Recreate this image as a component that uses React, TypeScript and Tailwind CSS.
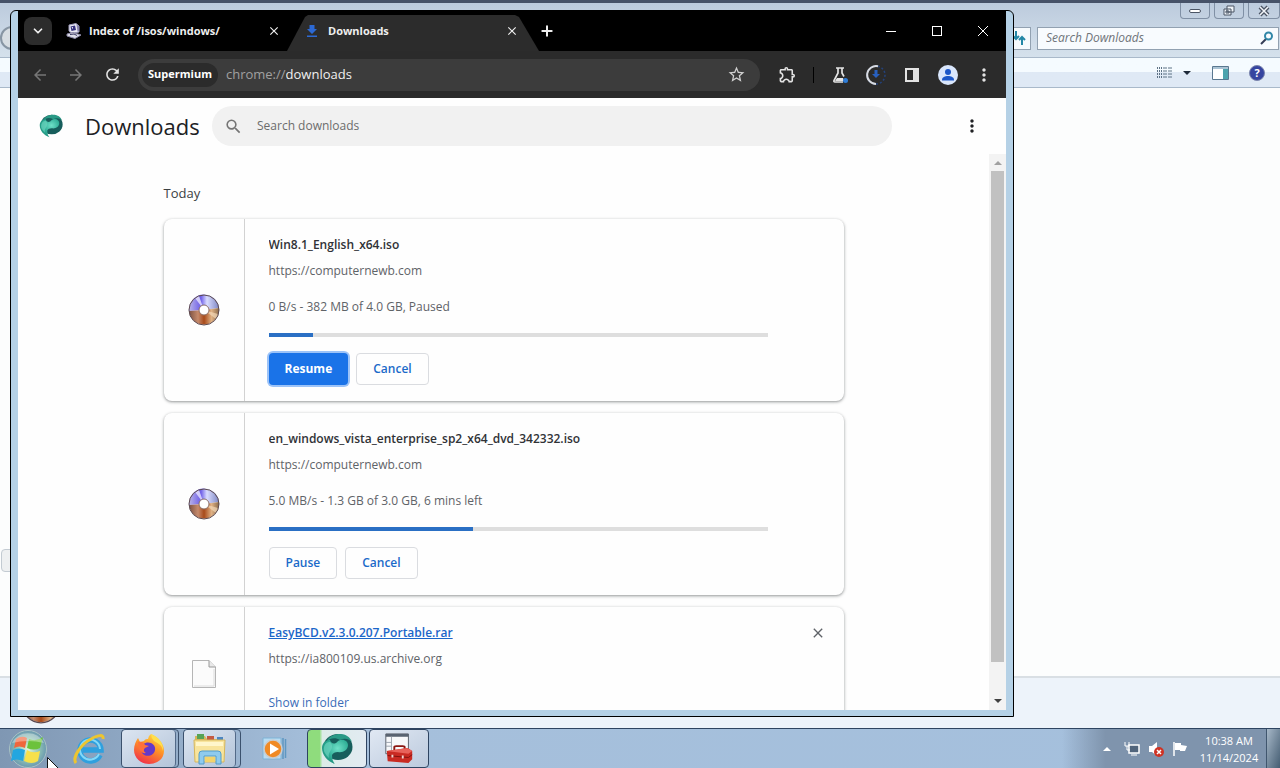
import { ReactNode } from "react";
import {
  MdArrowBack,
  MdArrowForward,
  MdClose,
  MdMoreVert,
  MdOutlineExtension,
  MdRefresh,
  MdSearch,
  MdStarBorder,
} from "react-icons/md";
import { ChevronDown, Plus } from "lucide-react";

interface IDownload {
  name: string
  host: string
  status: string
  progress: number
  paused: boolean
}

const downloads: IDownload[] = [
  { name: "Win8.1_English_x64.iso", host: "https://computernewb.com", status: "0 B/s - 382 MB of 4.0 GB, Paused", progress: 9, paused: true },
  { name: "en_windows_vista_enterprise_sp2_x64_dvd_342332.iso", host: "https://computernewb.com", status: "5.0 MB/s - 1.3 GB of 3.0 GB, 6 mins left", progress: 41, paused: false },
];

const DiscIcon = ({ className }: { className: string }) => (
  <svg viewBox="0 0 32 32" className={className}>
    <defs>
      <linearGradient id="discTop" x1="0" y1="0" x2="1" y2="0">
        <stop offset="0" stopColor="#b9b4e8" />
        <stop offset="0.4" stopColor="#6f5fe8" />
        <stop offset="0.6" stopColor="#d9dcff" />
        <stop offset="1" stopColor="#7d86c4" />
      </linearGradient>
      <linearGradient id="discBottom" x1="0" y1="0" x2="1" y2="0">
        <stop offset="0" stopColor="#7d5242" />
        <stop offset="0.3" stopColor="#c58a6c" />
        <stop offset="0.5" stopColor="#a84a1a" />
        <stop offset="0.75" stopColor="#dfb184" />
        <stop offset="1" stopColor="#8a6a4a" />
      </linearGradient>
    </defs>
    <path d="M1 17A15 15 0 0 1 31 14L16 16Z" fill="url(#discTop)" />
    <path d="M1 17A15 15 0 0 0 31 14L16 16Z" fill="url(#discBottom)" />
    <path d="M16 16L7 4A15 15 0 0 1 11 2Z" fill="#e8e6ff" opacity="0.8" />
    <path d="M16 16L30 20A15 15 0 0 1 28 25Z" fill="#f3d9b8" opacity="0.7" />
    <circle cx="16" cy="16" r="15" fill="none" stroke="#5d4a50" />
    <circle cx="16" cy="16" r="5" fill="#fff" stroke="#8c7068" />
  </svg>
)

const SupermiumIcon = ({ className }: { className: string }) => (
  <svg viewBox="0 0 32 32" className={className}>
    <defs>
      <radialGradient id="smLight" cx="0.6" cy="0.35" r="0.7">
        <stop offset="0" stopColor="#6fe0c8" />
        <stop offset="0.6" stopColor="#2fae96" />
        <stop offset="1" stopColor="#1c8b78" />
      </radialGradient>
    </defs>
    <ellipse cx="17" cy="14" rx="14.5" ry="13" fill="#175e5c" />
    <path d="M5 9C8 3 14 1 19 1C25 1 29 4 31 9C27 5 23 5 19 7C14 4 9 5 5 9Z" fill="#2a9a86" />
    <path d="M1 15C1 9 6 7 9 7C10 11 14 12 17 8C22 5 27 8 27 12C27 17 22 20 17 19C14 19 12 20 11 22C11 26 12 29 14 31C6 28 1 22 1 15Z" fill="url(#smLight)" />
    <path d="M3 14C4 10 7 9 9 9C11 11 12 14 10 17C8 20 7 22 8 25C4 21 2 18 3 14Z" fill="#6bd3bd" opacity="0.7" />
  </svg>
)

const ComputerIcon = () => (
  <svg viewBox="0 0 16 16" className="size-4 shrink-0">
    <path d="M3 2L10 0.500L13 3V9L6 10.500L3 8Z" fill="#e9e9f2" stroke="#9a98b8" />
    <path d="M4.500 3.500L9 2.500L10 7L5.500 8Z" fill="#34307c" />
    <path d="M5.500 4.500L7 4V6Z" fill="#fff" />
    <path d="M10.500 1.500L13 3V8L11.500 8.500Z" fill="#8883ad" />
    <path d="M1 11L7 9.500L15 12L9 15.500L1 13Z" fill="#dedee8" stroke="#8b88a5" />
    <path d="M4 11.500L8 11L11 12.500" stroke="#34345c" fill="none" />
  </svg>
)

const DownloadTabIcon = () => (
  <svg viewBox="0 0 16 16" className="size-4 shrink-0" fill="#2c69d4">
    <path d="M5.500 2H10.500V6H13L8 11L3 6H5.500Z" />
    <path d="M3 12.500H13V14H3Z" />
  </svg>
)

const LabsIcon = () => (
  <svg viewBox="0 0 20 20" className="size-5" fill="none" stroke="#e3e3e3" strokeWidth="1.700">
    <path d="M6 3H14M8 3V8L4 15.500Q3.500 17 5 17H13M12 3V8L14 11.500" />
    <path d="M7 13H13L14 16H5Z" fill="#e3e3e3" stroke="none" />
    <circle cx="15.500" cy="15.500" r="2.500" fill="#2e7cd6" stroke="none" />
  </svg>
)

const DownloadProgressIcon = () => (
  <svg viewBox="0 0 22 22" className="size-[22px]" fill="none">
    <circle cx="11" cy="11" r="9" stroke="#24427a" strokeWidth="1.500" strokeDasharray="2 2" />
    <path d="M13 2.200A9 9 0 1 0 11 20" stroke="#d8dbe2" strokeWidth="2" />
    <path d="M9.500 6H12.500V10H15L11 14L7 10H9.500Z" fill="#2860c0" />
  </svg>
)

const SidePanelIcon = () => (
  <svg viewBox="0 0 16 16" className="size-4">
    <path d="M1 1H15V15H1ZM3 3V13H9V3Z" fill="#e3e3e3" fillRule="evenodd" />
  </svg>
)

const ProfileIcon = () => (
  <svg viewBox="0 0 20 20" className="size-5">
    <circle cx="10" cy="10" r="10" fill="#d9e6fc" />
    <circle cx="10" cy="7" r="3" fill="#1b57c9" />
    <path d="M4 15C4 12 7 11 10 11S16 12 16 15V15.500H4Z" fill="#1b57c9" />
  </svg>
)

const FileIcon = () => (
  <svg viewBox="0 0 24 28" className="h-7 w-6">
    <path d="M0.500 0.500H17L23.500 7V27.500H0.500Z" fill="#fbfbfb" stroke="#b5b5b5" />
    <path d="M17 0.500V7H23.500" fill="#e9e9e9" stroke="#999" />
    <path d="M22 9V26H2" fill="none" stroke="#dcdcdc" />
  </svg>
)

const StartOrb = () => (
  <svg viewBox="0 0 40 40" className="size-10">
    <defs>
      <radialGradient id="orb" cx="0.5" cy="0.5" r="0.5">
        <stop offset="0" stopColor="#e4f6dc" />
        <stop offset="0.6" stopColor="#8fc3b4" />
        <stop offset="1" stopColor="#6b98b0" />
      </radialGradient>
    </defs>
    <circle cx="20" cy="20" r="18.500" fill="url(#orb)" stroke="#a9c3c4" />
    <path d="M8 10Q14 6 19 9L17 19Q11 16 6 19Z" fill="#f0663c" />
    <path d="M21 10Q28 13 35 8L32 19Q26 22 19 19Z" fill="#6cc23c" />
    <path d="M5 21Q11 18 17 21L15 32Q8 29 3 32Z" fill="#22a6e0" />
    <path d="M19 21Q25 25 32 22L30 32Q24 36 16 32Z" fill="#f6e04a" />
    <path d="M4 14A18 18 0 0 1 36 14Q20 10 4 14Z" fill="#fff" opacity="0.35" />
  </svg>
)

const ExplorerEIcon = () => (
  <svg viewBox="0 0 32 32" className="size-8" fill="none">
    <path d="M27 22A10.500 10.500 0 1 1 28 17H10" stroke="#2fa0de" strokeWidth="5.500" />
    <path d="M26 21A10 10 0 1 1 27 16" stroke="#85d8f7" strokeWidth="2" />
    <path d="M3 30C-1 25 7 12 18 6C25 2 31 1 30 6" stroke="#edc52f" strokeWidth="3" />
  </svg>
)

const FirefoxIcon = () => (
  <svg viewBox="0 0 32 32" className="size-8">
    <defs>
      <linearGradient id="fox" x1="0.8" y1="0" x2="0.3" y2="1">
        <stop offset="0" stopColor="#ffe14a" />
        <stop offset="0.45" stopColor="#ff9426" />
        <stop offset="1" stopColor="#f0304a" />
      </linearGradient>
    </defs>
    <path d="M18 1C25 4 31 10 31 18C31 26 24 31 16 31S1 25 1 17C1 12 3 8 5 5L7 9L11 8C12 6 14 6 15 6Q15 3 18 1Z" fill="url(#fox)" />
    <path d="M10 11C16 7 23 11 22 17C21 23 13 25 9 20C8 17 8 14 10 11Z" fill="#6539c8" />
    <path d="M5 9C8 8 11 9 12 12L16 13L12 15C10 17 11 19 13 20C9 21 5 17 5 9Z" fill="#ff7139" />
    <path d="M18 1C25 4 31 10 30 18C29 11 24 10 21 8Q18 5 18 1Z" fill="#ffdf4c" />
  </svg>
)

const FolderIcon = () => (
  <svg viewBox="0 0 36 32" className="h-8 w-9">
    <path d="M3 3H13L15 6H31V28H3Z" fill="#d9b65a" />
    <path d="M5 1H12V6H5Z" fill="#57a356" />
    <path d="M15 3H22V7H15Z" fill="#c45b42" />
    <path d="M25 4H31V8H25Z" fill="#4d86bf" />
    <path d="M2 7H33L32 29H3Z" fill="#f8e49c" stroke="#d5b65c" />
    <path d="M4 9H31V13H4Z" fill="#fff6cb" />
    <path d="M7 31V21Q7 18 10 18H26Q29 18 29 21V31H24V23H12V31Z" fill="#8fcbee" stroke="#539cca" />
    <path d="M13 24H23V29H13Z" fill="#f3d46c" />
  </svg>
)

const MediaPlayerIcon = () => (
  <svg viewBox="0 0 28 28" className="size-7">
    <path d="M2 3H20V24H2Z" fill="#b8dcf3" stroke="#7fb3d6" />
    <path d="M22 3V24M24.500 4V23" stroke="#5e97c2" strokeWidth="1.500" />
    <circle cx="12" cy="14" r="9" fill="#f08a24" stroke="#c9cdd0" strokeWidth="1.500" />
    <path d="M9 8.500L18 14L9 19.500Z" fill="#fff" />
  </svg>
)

const ToolboxIcon = () => (
  <svg viewBox="0 0 32 34" className="h-8 w-8">
    <path d="M2 1H26V22H2Z" fill="#f7f8fa" stroke="#555d68" />
    <path d="M2 1H26V4H2Z" fill="#596371" />
    <path d="M8 4V20M2 10H8M2 14H8" stroke="#9aa2ad" />
    <path d="M11 18V15Q11 14 13 14H20Q22 14 22 15V18" fill="none" stroke="#8b1712" strokeWidth="2" />
    <path d="M3 19L25 16L30 19V28L26 32L4 30Z" fill="#c92a22" />
    <path d="M3 19L25 16L30 19L26 22Z" fill="#e8625a" />
    <path d="M4 24L26 26L30 23" stroke="#7d110d" fill="none" />
    <path d="M9 23V26M20 24V27" stroke="#f0d5d0" strokeWidth="2" />
  </svg>
)

const ToolButton = ({ label, children }: { label: string, children: ReactNode }) => (
  <button aria-label={label} className="flex h-9 w-9 shrink-0 items-center justify-center text-[#e3e3e3]">
    {children}
  </button>
)

const DownloadCard = ({ item }: { item: IDownload }) => (
  <li className="flex rounded-lg bg-[#fefefe] shadow-[0_1px_3px_1px_rgba(60,64,67,0.2),0_1px_2px_rgba(60,64,67,0.3)]">
    <div className="flex w-[81px] shrink-0 items-center justify-center border-r border-[#d2d2d2]">
      <DiscIcon className="size-8" />
    </div>
    <div className="flex min-w-0 flex-1 flex-col py-4 pl-6 pr-[76px] text-[12px] leading-5 text-[#5f6368]">
      <h3 className="truncate font-semibold text-[#303236]">{item.name}</h3>
      <span className="mt-[6px]">{item.host}</span>
      <span className="mt-4">{item.status}</span>
      <div role="progressbar" aria-label={item.name} aria-valuenow={item.progress} className="mt-4 h-1 bg-[#dedede]">
        <div className="h-1 bg-[#2a6fc4]" style={{ width: `${item.progress}%` }}></div>
      </div>
      <div className="mt-4 flex gap-2 font-semibold">
        {item.paused ? (
          <button className="h-8 rounded bg-[#1a73e8] px-4 font-bold text-white ring-2 ring-[#9cc3f8]">Resume</button>
        ) : (
          <button className="h-8 rounded border border-[#dadce0] px-4 text-[#1b6ac9]">Pause</button>
        )}
        <button className="h-8 rounded border border-[#dadce0] px-4 text-[#1b6ac9]">Cancel</button>
      </div>
    </div>
  </li>
)

const ExplorerWindow = () => (
  <section aria-label="Explorer" className="flex h-full flex-col border-t-[3px] border-[#465268] bg-[#fcfdfd]">
    <div className="h-[54px] shrink-0 bg-gradient-to-b from-[#bccbdd] to-[#d5e1ec]">
      <div className="flex h-[23px] items-start justify-end gap-1 text-[#4b5565]">
        <button aria-label="Minimize" className="flex h-4 w-[30px] items-center justify-center rounded-b border border-t-0 border-[#8090a5]">
          <span className="h-1 w-3 rounded-sm border border-[#4b5565] bg-white"></span>
        </button>
        <button aria-label="Restore" className="flex h-4 w-[30px] items-center justify-center rounded-b border border-t-0 border-[#8090a5]">
          <svg viewBox="0 0 14 12" className="h-3 w-[14px]" fill="#eef3f8" stroke="#4b5565">
            <path d="M5 1H12V7H5ZM2 4H9V10H2ZM4 6H7V8H4Z" />
          </svg>
        </button>
        <button aria-label="Close" className="flex h-4 w-8 items-center justify-center rounded-b border border-t-0 border-[#8090a5]">
          <svg viewBox="0 0 12 12" className="size-3" fill="none">
            <path d="M2 2L10 10M10 2L2 10" stroke="#4b5565" strokeWidth="4" />
            <path d="M2 2L10 10M10 2L2 10" stroke="#f3f6fa" strokeWidth="1.500" />
          </svg>
        </button>
      </div>
      <div className="flex items-center">
        <span className="h-6 w-6 rounded-full border-2 border-[#8795a3] bg-[#d7dde2]"></span>
        <button aria-label="Refresh" className="ml-auto flex h-[23px] w-8 items-center justify-end border border-[#92a1b1] bg-[#f6fafd] pr-1">
          <svg viewBox="0 0 14 14" className="size-[14px]" fill="none" stroke="#2387a6" strokeWidth="2">
            <path d="M4 0V7M1 5L4 8L7 5M10 14V7M7 9L10 6L13 9" />
          </svg>
        </button>
        <label className="ml-[6px] mr-px flex h-[23px] w-[242px] items-center border border-[#92a1b1] bg-[#f8fbfe] pl-2 pr-1">
          <input aria-label="Search Downloads" placeholder="Search Downloads" className="min-w-0 flex-1 bg-transparent text-[12px] italic outline-none placeholder:text-[#6f747a]" />
          <svg viewBox="0 0 14 14" className="size-[14px]" fill="none" strokeWidth="2">
            <path d="M6 8L1 13" stroke="#333c55" />
            <circle cx="8.500" cy="5" r="3.500" stroke="#3187a8" />
          </svg>
        </label>
      </div>
    </div>
    <div className="flex h-[31px] shrink-0 items-center justify-end border-y border-[#a9b9ca] bg-gradient-to-b from-[#f5fbff] from-50% to-[#dfe9f5] to-50% pr-[15px]">
      <button aria-label="Change your view" className="flex items-center gap-[10px]">
        <svg viewBox="0 0 16 14" className="h-[14px] w-4" stroke="#5d7285">
          <path d="M0 2H5M0 5H5M0 8H5M0 11H5" strokeWidth="2" strokeDasharray="1 1" />
          <path d="M6 2H16M6 5H16M6 8H16M6 11H16" strokeDasharray="4 1" />
        </svg>
        <svg viewBox="0 0 8 4" className="h-1 w-2"><path d="M0 0H8L4 4Z" fill="#1e2a3a" /></svg>
      </button>
      <button aria-label="Preview pane" className="ml-[21px]">
        <svg viewBox="0 0 17 14" className="h-[14px] w-[17px]">
          <path d="M0.500 0.500H16.500V13.500H0.500Z" fill="#fff" stroke="#5a7890" />
          <path d="M1 1H16V3H1Z" fill="#aac3d4" />
          <path d="M11 3H16V13H11Z" fill="#4da3ad" />
        </svg>
      </button>
      <button aria-label="Help" className="ml-5 flex size-4 items-center justify-center rounded-full border border-[#7c86ad] bg-[#3645a0] text-[11px] font-bold leading-3 text-white">?</button>
    </div>
    <div className="flex flex-1 items-end pb-[104px]">
      <span className="ml-px h-[23px] w-5 rounded border border-[#c3cbd2] bg-[#eef0f1]"></span>
    </div>
    <div className="h-[52px] shrink-0 border-t-2 border-[#d9dfe4] bg-[#edf3fa] pl-[21px] pt-[6px]">
      <DiscIcon className="size-10" />
    </div>
  </section>
)

const TabStrip = () => (
  <div className="flex h-10 shrink-0 items-center bg-black text-[11px] font-bold text-[#efefef]">
    <button aria-label="Search tabs" className="ml-[6px] flex size-7 items-center justify-center rounded-lg bg-[#2c2c2c]">
      <ChevronDown className="size-[14px]" strokeWidth={3} />
    </button>
    <div className="ml-1 flex w-[231px] items-center gap-[7px] pl-[10px] pr-[6px]">
      <ComputerIcon />
      <span className="flex-1 truncate">Index of /isos/windows/</span>
      <button aria-label="Close tab"><MdClose className="size-[14px]" /></button>
    </div>
    <div className="flex h-9 w-[252px] items-center gap-2 self-end bg-[#2c2c2c] pl-[17px] pr-5 pb-1 [clip-path:polygon(18px_2px,21px_0,228px_0,232px_2px,100%_100%,0_100%)]">
      <DownloadTabIcon />
      <span className="flex-1 truncate">Downloads</span>
      <button aria-label="Close tab"><MdClose className="size-[14px]" /></button>
    </div>
    <button aria-label="New tab"><Plus className="size-4" strokeWidth={3} /></button>
    <div className="ml-auto flex h-full">
      <button aria-label="Minimize" className="flex w-[46px] items-center justify-center"><span className="h-px w-[10px] bg-white"></span></button>
      <button aria-label="Maximize" className="flex w-[46px] items-center justify-center"><span className="size-[10px] border border-white"></span></button>
      <button aria-label="Close" className="flex w-[46px] items-center justify-center">
        <svg viewBox="0 0 10 10" className="size-[10px]" stroke="#fff"><path d="M0 0L10 10M10 0L0 10" /></svg>
      </button>
    </div>
  </div>
)

const Toolbar = () => (
  <div className="flex h-[47px] shrink-0 items-center bg-[#2b2b2b] px-1 text-[13px]">
    <button aria-label="Back" className="flex h-9 w-9 items-center justify-center text-[#777]"><MdArrowBack className="size-[18px]" /></button>
    <button aria-label="Forward" className="flex h-9 w-9 items-center justify-center text-[#777]"><MdArrowForward className="size-[18px]" /></button>
    <ToolButton label="Reload"><MdRefresh className="size-[19px]" /></ToolButton>
    <div className="ml-2 mr-[9px] flex h-8 min-w-0 flex-1 items-center rounded-full bg-[#3c3c3c] pl-1 pr-[14px]">
      <span className="flex h-6 items-center rounded-full bg-[#2b2b2b] px-[6px] text-[11px] font-bold text-white">Supermium</span>
      <label className="ml-2 flex min-w-0 flex-1 items-center text-[#a0a0a0]">
        chrome://
        <input aria-label="Address" defaultValue="downloads" className="min-w-0 flex-1 bg-transparent text-[#f0f0f0] outline-none" />
      </label>
      <button aria-label="Bookmark this tab"><MdStarBorder className="size-[19px] text-[#d0d0d0]" /></button>
    </div>
    <ToolButton label="Extensions"><MdOutlineExtension className="size-[19px]" /></ToolButton>
    <span className="mx-2 h-4 w-px bg-black"></span>
    <ToolButton label="Labs"><LabsIcon /></ToolButton>
    <ToolButton label="Downloads"><DownloadProgressIcon /></ToolButton>
    <ToolButton label="Side panel"><SidePanelIcon /></ToolButton>
    <ToolButton label="Profile"><ProfileIcon /></ToolButton>
    <ToolButton label="Menu"><MdMoreVert className="size-5" /></ToolButton>
  </div>
)

const BrowserWindow = () => (
  <section aria-label="Downloads" className="absolute bottom-[11px] left-[10px] right-[266px] top-[10px] flex flex-col rounded-t-md border border-black bg-[#b5d1e6] px-[7px] pb-[6px]">
    <TabStrip />
    <Toolbar />
    <div className="flex min-h-0 flex-1 flex-col bg-[#fefefe]">
      <header className="flex h-14 shrink-0 items-center pr-[24px]">
        <div className="flex w-[194px] shrink-0 items-center gap-[22px] pl-[21px]">
          <SupermiumIcon className="size-6" />
          <h1 className="text-[22px] text-[#202124]">Downloads</h1>
        </div>
        <label className="flex h-10 max-w-[680px] flex-1 items-center rounded-full bg-[#f1f1f1] pl-3">
          <MdSearch className="size-[19px] text-[#757575]" />
          <input aria-label="Search downloads" placeholder="Search downloads" className="ml-[14px] min-w-0 flex-1 bg-transparent text-[12px] outline-none placeholder:text-[#6c6c6c]" />
        </label>
        <button aria-label="More actions" className="ml-auto"><MdMoreVert className="size-5 text-[#202124]" /></button>
      </header>
      <div className="flex min-h-0 flex-1">
        <main className="min-w-0 flex-1 overflow-hidden">
          <div className="mx-auto max-w-[680px]">
            <h2 className="pb-4 pt-[29px] text-[13px] leading-5 text-[#3c4043]">Today</h2>
            <ul className="flex flex-col gap-3">
              {downloads.map((item) => (
                <DownloadCard key={item.name} item={item} />
              ))}
              <li className="flex rounded-lg bg-[#fefefe] shadow-[0_1px_3px_1px_rgba(60,64,67,0.2),0_1px_2px_rgba(60,64,67,0.3)]">
                <div className="flex w-[81px] shrink-0 items-center justify-center border-r border-[#d2d2d2]">
                  <FileIcon />
                </div>
                <div className="flex flex-1 flex-col items-start pb-8 pl-6 pt-4 text-[12px] leading-5">
                  <a href="#" className="font-semibold text-[#1b66c9] underline">EasyBCD.v2.3.0.207.Portable.rar</a>
                  <span className="mt-[6px] text-[#5f6368]">https://ia800109.us.archive.org</span>
                  <a href="#" className="mt-7 leading-3 text-[#3a6cb8]">Show in folder</a>
                </div>
                <button aria-label="Remove from list" className="mr-[18px] mt-[18px] self-start"><MdClose className="size-4 text-[#5f6368]" /></button>
              </li>
            </ul>
          </div>
        </main>
        <div className="flex w-[17px] shrink-0 flex-col items-center bg-[#f3f3f3]">
          <span className="flex h-[17px] items-center">
            <svg viewBox="0 0 8 4" className="h-1 w-2"><path d="M0 4H8L4 0Z" fill="#a0a0a0" /></svg>
          </span>
          <span className="w-[13px] flex-1 bg-[#c1c1c1]"></span>
          <span className="flex h-12 items-end pb-[7px]">
            <svg viewBox="0 0 8 4" className="h-1 w-2"><path d="M0 0H8L4 4Z" fill="#404040" /></svg>
          </span>
        </div>
      </div>
    </div>
  </section>
)

const Taskbar = () => (
  <footer className="flex h-10 shrink-0 items-stretch overflow-hidden border-t border-[#2e4461] bg-gradient-to-r from-[#7f97b3] via-[#a5bfdb] via-25% to-[#a5c0dd] pl-2">
    <button aria-label="Start" className="w-10 shrink-0"><StartOrb /></button>
    <button aria-label="Internet Explorer" className="ml-[13px] flex w-14 items-center justify-center"><ExplorerEIcon /></button>
    <button aria-label="Firefox" className="ml-1 flex w-[58px] rounded border border-[#3b516d] pr-[2px]">
      <span className="flex h-full flex-1 items-center justify-center rounded border-r border-[#536a88] bg-gradient-to-br from-[#dce5f1] to-[#b3c4d9]"><FirefoxIcon /></span>
    </button>
    <button aria-label="Windows Explorer" className="ml-1 flex w-[58px] rounded border border-[#3b516d] pr-1">
      <span className="flex h-full flex-1 items-center justify-center rounded border-r border-[#536a88] bg-gradient-to-br from-[#dce5f1] to-[#b3c4d9]"><FolderIcon /></span>
    </button>
    <button aria-label="Media Player" className="ml-1 flex w-[60px] items-center justify-center"><MediaPlayerIcon /></button>
    <button aria-label="Supermium" className="ml-[2px] flex w-[60px] items-center justify-center rounded border border-[#2e4461] bg-gradient-to-r from-[#8fdc7d] from-20% via-[#dcebe8] via-25% to-[#e2ebf2]">
      <SupermiumIcon className="size-8" />
    </button>
    <button aria-label="Toolbox" className="ml-[2px] flex w-[60px] items-center justify-center rounded border border-[#2e4461] bg-gradient-to-br from-[#e0e8f3] to-[#bccadd]">
      <ToolboxIcon />
    </button>
    <div className="ml-auto flex items-center bg-gradient-to-r from-transparent to-[#7f94ad] to-20% pl-[41px]">
      <svg viewBox="0 0 8 4" className="h-1 w-2"><path d="M0 4H8L4 0Z" fill="#fff" /></svg>
      <svg viewBox="0 0 16 16" className="ml-[13px] size-4" fill="none" stroke="#fff">
        <path d="M5 4H15V12H5Z" fill="#51657c" strokeWidth="1.500" />
        <path d="M1 1V5H5V1M3 5V9H6M7 14H13" />
      </svg>
      <svg viewBox="0 0 16 16" className="ml-2 size-4">
        <path d="M1 5H4L9 1V15L4 11H1Z" fill="#fff" />
        <circle cx="11" cy="11" r="5" fill="#cf3324" />
        <path d="M9 9L13 13M13 9L9 13" stroke="#fff" strokeWidth="1.500" />
      </svg>
      <svg viewBox="0 0 16 16" className="ml-2 size-4">
        <path d="M2 1V15" stroke="#fff" strokeWidth="1.500" />
        <path d="M3 2H9V4L15 5L13 10H8V9H3Z" fill="#fff" />
      </svg>
      <div className="flex w-[78px] flex-col items-center pl-1 text-[11px] leading-[17px] text-white">
        <span>10:38 AM</span>
        <span>11/14/2024</span>
      </div>
      <button aria-label="Show desktop" className="h-full w-[14px] border-l border-[#40566e] bg-gradient-to-br from-[#a7b8c8] to-[#465e73]"></button>
    </div>
  </footer>
)

export default function App() {
  return (
    <div className="relative flex h-screen flex-col overflow-hidden font-['Open_Sans','Noto_Sans',sans-serif]">
      <div className="relative min-h-0 flex-1">
        <ExplorerWindow />
        <BrowserWindow />
      </div>
      <Taskbar />
      {/* mouse pointer */}
      <svg viewBox="0 0 12 19" className="pointer-events-none absolute -bottom-2 left-[47px] h-[19px] w-3">
        <path d="M0.500 0.500V16L4 12.500L6.500 18L9 17L6.500 11.500H11.500Z" fill="#fff" stroke="#111" />
      </svg>
    </div>
  );
}
